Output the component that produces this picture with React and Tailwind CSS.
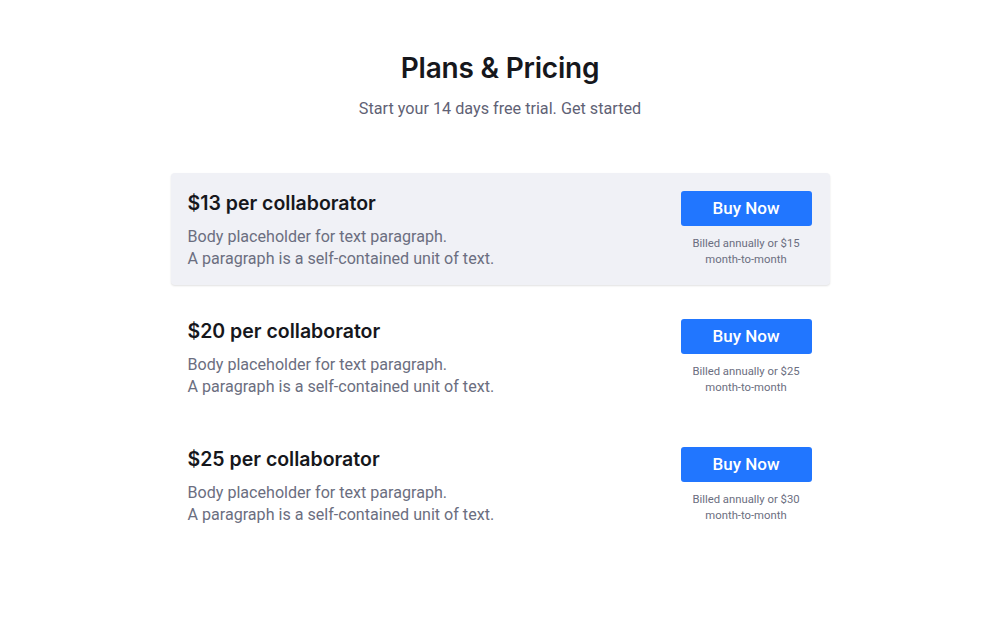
import React from 'react';

const plans = [
    { price: 13, monthly: 15, active: true },
    { price: 20, monthly: 25, active: false },
    { price: 25, monthly: 30, active: false },
];

const PlanRow = ({ plan }) => {
    const { price, monthly, active } = plan;

    return (
        <div
            className={`flex justify-between rounded-[4px] pl-[17px] pr-[18px] pt-4 pb-[15px] ${active ? 'bg-[#f0f1f6] shadow-[0_1px_2px_rgba(0,0,0,0.12)]' : ''}`}
        >
            <div>
                <h2 className="text-[19.5px] leading-7 font-semibold text-[#16171c] font-['Inter',sans-serif]">
                    ${price} per collaborator
                </h2>
                <p className="mt-[9px] text-[16.1px] leading-[22px] text-[#6b6e80]">
                    Body placeholder for text paragraph.
                    <br />
                    A paragraph is a self-contained unit of text.
                </p>
            </div>
            <div className="flex flex-col items-center pt-[2px] w-[131px]">
                <button className="w-[131px] h-[35px] rounded-[3px] bg-[#2176ff] text-white text-[17px] font-medium">
                    Buy Now
                </button>
                <p className="mt-[10px] text-[11.3px] leading-4 text-[#6b6e80] text-center whitespace-nowrap">
                    Billed annually or ${monthly}
                    <br />
                    month-to-month
                </p>
            </div>
        </div>
    );
};

export default function App() {
    return (
        <div className="min-h-[625px] bg-white font-['Roboto',sans-serif] pt-[51px]">
            <h1 className="text-center text-[28px] leading-[34px] font-semibold text-[#16171c] font-['Inter',sans-serif] tracking-[-0.2px]">
                Plans &amp; Pricing
            </h1>
            <p className="mt-[12px] text-center text-[16.2px] leading-6 text-[#5f6275]">
                Start your 14 days free trial. Get started
            </p>
            <div className="mx-auto mt-[52px] w-[659px] flex flex-col gap-4">
                {plans.map((plan) => (
                    <PlanRow key={plan.price} plan={plan} />
                ))}
            </div>
        </div>
    );
}
